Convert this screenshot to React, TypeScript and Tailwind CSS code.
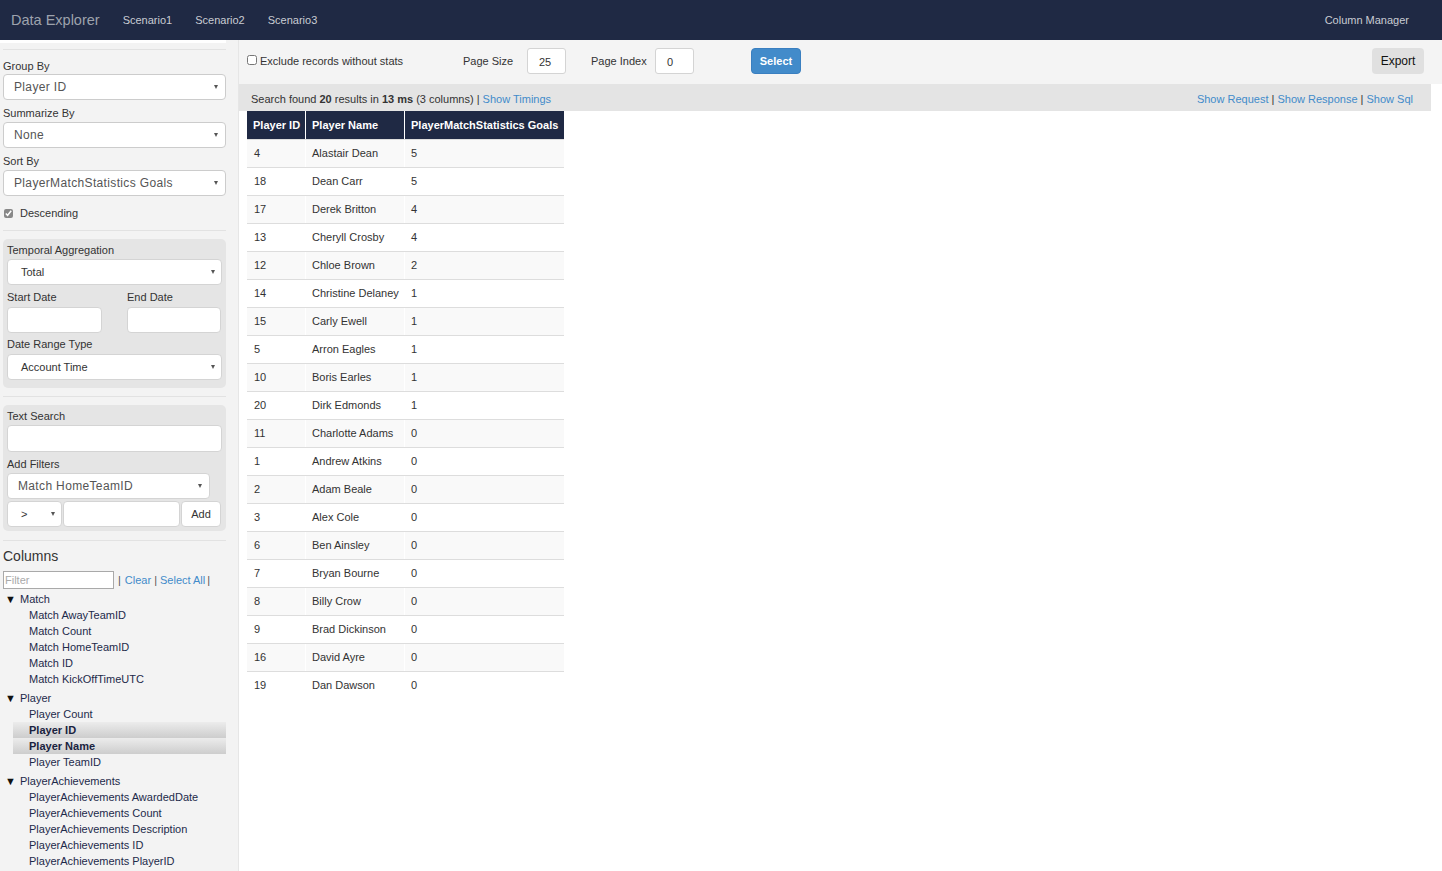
import React from "react";

const rows: [number, string, number][] = [
  [4, "Alastair Dean", 5],
  [18, "Dean Carr", 5],
  [17, "Derek Britton", 4],
  [13, "Cheryll Crosby", 4],
  [12, "Chloe Brown", 2],
  [14, "Christine Delaney", 1],
  [15, "Carly Ewell", 1],
  [5, "Arron Eagles", 1],
  [10, "Boris Earles", 1],
  [20, "Dirk Edmonds", 1],
  [11, "Charlotte Adams", 0],
  [1, "Andrew Atkins", 0],
  [2, "Adam Beale", 0],
  [3, "Alex Cole", 0],
  [6, "Ben Ainsley", 0],
  [7, "Bryan Bourne", 0],
  [8, "Billy Crow", 0],
  [9, "Brad Dickinson", 0],
  [16, "David Ayre", 0],
  [19, "Dan Dawson", 0],
];

const tree: { name: string; items: string[] }[] = [
  {
    name: "Match",
    items: ["Match AwayTeamID", "Match Count", "Match HomeTeamID", "Match ID", "Match KickOffTimeUTC"],
  },
  { name: "Player", items: ["Player Count", "Player ID", "Player Name", "Player TeamID"] },
  {
    name: "PlayerAchievements",
    items: [
      "PlayerAchievements AwardedDate",
      "PlayerAchievements Count",
      "PlayerAchievements Description",
      "PlayerAchievements ID",
      "PlayerAchievements PlayerID",
    ],
  },
];

const selected = new Set(["Player ID", "Player Name"]);

function Caret() {
  return (
    <span className="inline-block w-0 h-0 border-l-[2.5px] border-r-[2.5px] border-t-[4px] border-l-transparent border-r-transparent border-t-[#555]" />
  );
}

function BigSelect({ value }: { value: string }) {
  return (
    <div className="h-[26px] bg-white border border-[#cccccc] rounded-[4px] flex items-center justify-between pl-[10px] pr-[7px] text-[12px] tracking-[0.35px] text-[#555]">
      <span>{value}</span>
      <Caret />
    </div>
  );
}

function SmallSelect({ value }: { value: string }) {
  return (
    <div className="h-[26px] bg-white border border-[#d4d4d4] rounded-[4px] flex items-center justify-between pl-[13px] pr-[6px] text-[11px] text-[#333]">
      <span>{value}</span>
      <Caret />
    </div>
  );
}

function Label({ children, className = "" }: { children: React.ReactNode; className?: string }) {
  return <div className={"text-[11px] leading-[15px] text-[#333] " + className}>{children}</div>;
}

function Sidebar() {
  return (
    <aside className="w-[239px] shrink-0 bg-[#f3f3f3] border-r border-[#e6e6e6] pl-[3px] pr-[12px] overflow-hidden">
      <div className="h-[3px] bg-white -ml-[3px]" />
      <div className="mt-[6px] border-t border-[#e2e2e2]" />
      <Label className="mt-[9px]">Group By</Label>
      <BigSelect value="Player ID" />
      <Label className="mt-[6px] mb-[1px]">Summarize By</Label>
      <BigSelect value="None" />
      <Label className="mt-[6px] mb-[1px]">Sort By</Label>
      <BigSelect value="PlayerMatchStatistics Goals" />
      <div className="mt-[10px] h-[14px] flex items-center text-[11px] text-[#333]">
        <input type="checkbox" defaultChecked className="w-[9px] h-[9px] ml-[1px] mr-[7px] accent-[#888]" />
        <span>Descending</span>
      </div>
      <div className="mt-[10px] border-t border-[#e2e2e2]" />
      <div className="mt-[8px] bg-[#e5e5e5] rounded-[5px] px-[4px] pt-[4px] pb-[8px]">
        <Label>Temporal Aggregation</Label>
        <div className="mt-[1px]">
          <SmallSelect value="Total" />
        </div>
        <div className="grid grid-cols-[95px_94px] gap-x-[25px] mt-[5px]">
          <Label>Start Date</Label>
          <Label>End Date</Label>
          <div className="mt-[2px] h-[26px] bg-white border border-[#d4d4d4] rounded-[4px]" />
          <div className="mt-[2px] h-[26px] bg-white border border-[#d4d4d4] rounded-[4px]" />
        </div>
        <Label className="mt-[4px]">Date Range Type</Label>
        <div className="mt-[2px]">
          <SmallSelect value="Account Time" />
        </div>
      </div>
      <div className="mt-[8px] border-t border-[#e2e2e2]" />
      <div className="mt-[8px] bg-[#e5e5e5] rounded-[5px] px-[4px] pt-[4px] pb-[4px]">
        <Label>Text Search</Label>
        <div className="mt-[1px] h-[27px] bg-white border border-[#d4d4d4] rounded-[4px]" />
        <Label className="mt-[5px]">Add Filters</Label>
        <div className="mt-[1px] w-[203px] h-[26px] bg-white border border-[#d4d4d4] rounded-[4px] flex items-center justify-between pl-[10px] pr-[7px] text-[12px] tracking-[0.35px] text-[#555]">
          <span>Match HomeTeamID</span>
          <Caret />
        </div>
        <div className="mt-[2px] flex gap-[1px] h-[26px]">
          <div className="w-[55px] bg-white border border-[#d4d4d4] rounded-[4px] flex items-center justify-between pl-[13px] pr-[6px] text-[11px] text-[#333]">
            <span>&gt;</span>
            <Caret />
          </div>
          <div className="w-[117px] bg-white border border-[#d4d4d4] rounded-[4px]" />
          <div className="w-[40px] bg-white border border-[#d4d4d4] rounded-[4px] flex items-center justify-center text-[11px] text-[#333]">
            Add
          </div>
        </div>
      </div>
      <div className="mt-[9px] border-t border-[#e2e2e2]" />
      <div className="mt-[7px] text-[14px] leading-[17px] text-[#333]">Columns</div>
      <div className="mt-[6px] flex items-center text-[11px]">
        <div className="w-[111px] h-[18px] bg-white border border-[#a9a9a9] flex items-center pl-[1px] text-[#aaa]">
          Filter
        </div>
        <span className="ml-[4px] text-[#555]">|</span>
        <span className="ml-[4px] text-[#428bca]">Clear</span>
        <span className="ml-[3px] text-[#555]">|</span>
        <span className="ml-[3px] text-[#428bca]">Select All</span>
        <span className="ml-[2px] text-[#555]">|</span>
      </div>
      <div className="mt-[2px] text-[11px] text-[#1d2a4a]">
        {tree.map((g, gi) => (
          <div key={g.name} className={gi > 0 ? "mt-[3px]" : ""}>
            <div className="h-[16px] flex items-center pl-[2px]">
              <span className="w-[15px] text-[11px] text-[#111]">▼</span>
              <span>{g.name}</span>
            </div>
            {g.items.map((it) => (
              <div
                key={it}
                className={
                  "h-[16px] flex items-center ml-[10px] pl-[16px] " +
                  (selected.has(it) ? "bg-gradient-to-b from-[#ececec] to-[#cdcdcd] font-bold text-[#1a2340]" : "")
                }
              >
                {it}
              </div>
            ))}
          </div>
        ))}
      </div>
    </aside>
  );
}

function Main() {
  return (
    <main className="flex-1 flex flex-col bg-white min-w-0">
      <div className="h-[44px] bg-[#f4f4f4] flex items-start pt-[8px] pl-[8px] pr-[18px] text-[11px] text-[#333]">
        <div className="h-[26px] flex items-center">
          <div className="w-[216px] flex items-center -mt-[2px]">
            <input type="checkbox" className="w-[10px] h-[10px] m-0 mr-[3px] accent-[#888]" />
            <span className="mt-[2px]">Exclude records without stats</span>
          </div>
          <span className="w-[64px]">Page Size</span>
          <div className="w-[39px] h-[26px] bg-white border border-[#d4d4d4] rounded-[3px] flex items-center pl-[11px] pt-[2px]">
            25
          </div>
          <span className="ml-[25px] w-[64px]">Page Index</span>
          <div className="w-[39px] h-[26px] bg-white border border-[#d4d4d4] rounded-[3px] flex items-center pl-[11px] pt-[2px]">
            0
          </div>
          <div className="ml-[57px] w-[50px] h-[26px] bg-[#428bca] border border-[#3a7fc0] rounded-[4px] flex items-center justify-center text-white font-bold text-[11px]">
            Select
          </div>
        </div>
        <div className="ml-auto w-[52px] h-[26px] bg-[#e0e0e0] rounded-[4px] flex items-center justify-center text-[12px] text-[#111]">
          Export
        </div>
      </div>
      <div className="h-[27px] mr-[11px] bg-[#e4e4e4] flex items-center justify-between pt-[3px] pl-[12px] pr-[18px] text-[11px] text-[#333]">
        <span>
          Search found <b>20</b> results in <b>13 ms</b> (3 columns) | <span className="text-[#428bca]">Show Timings</span>
        </span>
        <span>
          <span className="text-[#428bca]">Show Request</span> | <span className="text-[#428bca]">Show Response</span> |{" "}
          <span className="text-[#428bca]">Show Sql</span>
        </span>
      </div>
      <div className="ml-[8px] w-[317px] text-[11px]">
        <div className="h-[28px] flex bg-[#1f2944] text-white font-bold">
          <div className="w-[58px] pl-[6px] flex items-center">Player ID</div>
          <div className="w-[99px] pl-[6px] flex items-center border-l border-white">Player Name</div>
          <div className="flex-1 pl-[6px] flex items-center border-l border-white">PlayerMatchStatistics Goals</div>
        </div>
        {rows.map((r, i) => (
          <div
            key={r[0]}
            className={"h-[28px] flex border-t border-[#dddddd] text-[#333] " + (i % 2 === 0 ? "bg-[#f9f9f9]" : "bg-white")}
          >
            <div className="w-[58px] pl-[7px] flex items-center">{r[0]}</div>
            <div className="w-[99px] pl-[6px] flex items-center border-l border-white">{r[1]}</div>
            <div className="flex-1 pl-[6px] flex items-center border-l border-white">{r[2]}</div>
          </div>
        ))}
      </div>
    </main>
  );
}

export default function App() {
  return (
    <div
      className="w-[1442px] h-[871px] overflow-hidden flex flex-col"
      style={{ fontFamily: '"Liberation Sans", Arial, sans-serif' }}
    >
      <nav className="h-[40px] shrink-0 bg-[#1f2944] flex items-center pl-[11px] pr-[33px]">
        <span className="text-[14.5px] text-[#9da2ad] mt-[2px]">Data Explorer</span>
        <span className="ml-[23px] text-[11px] text-[#c9ccd3]">Scenario1</span>
        <span className="ml-[23px] text-[11px] text-[#c9ccd3]">Scenario2</span>
        <span className="ml-[23px] text-[11px] text-[#c9ccd3]">Scenario3</span>
        <span className="ml-auto text-[11px] text-[#c9ccd3]">Column Manager</span>
      </nav>
      <div className="flex flex-1 min-h-0">
        <Sidebar />
        <Main />
      </div>
    </div>
  );
}
